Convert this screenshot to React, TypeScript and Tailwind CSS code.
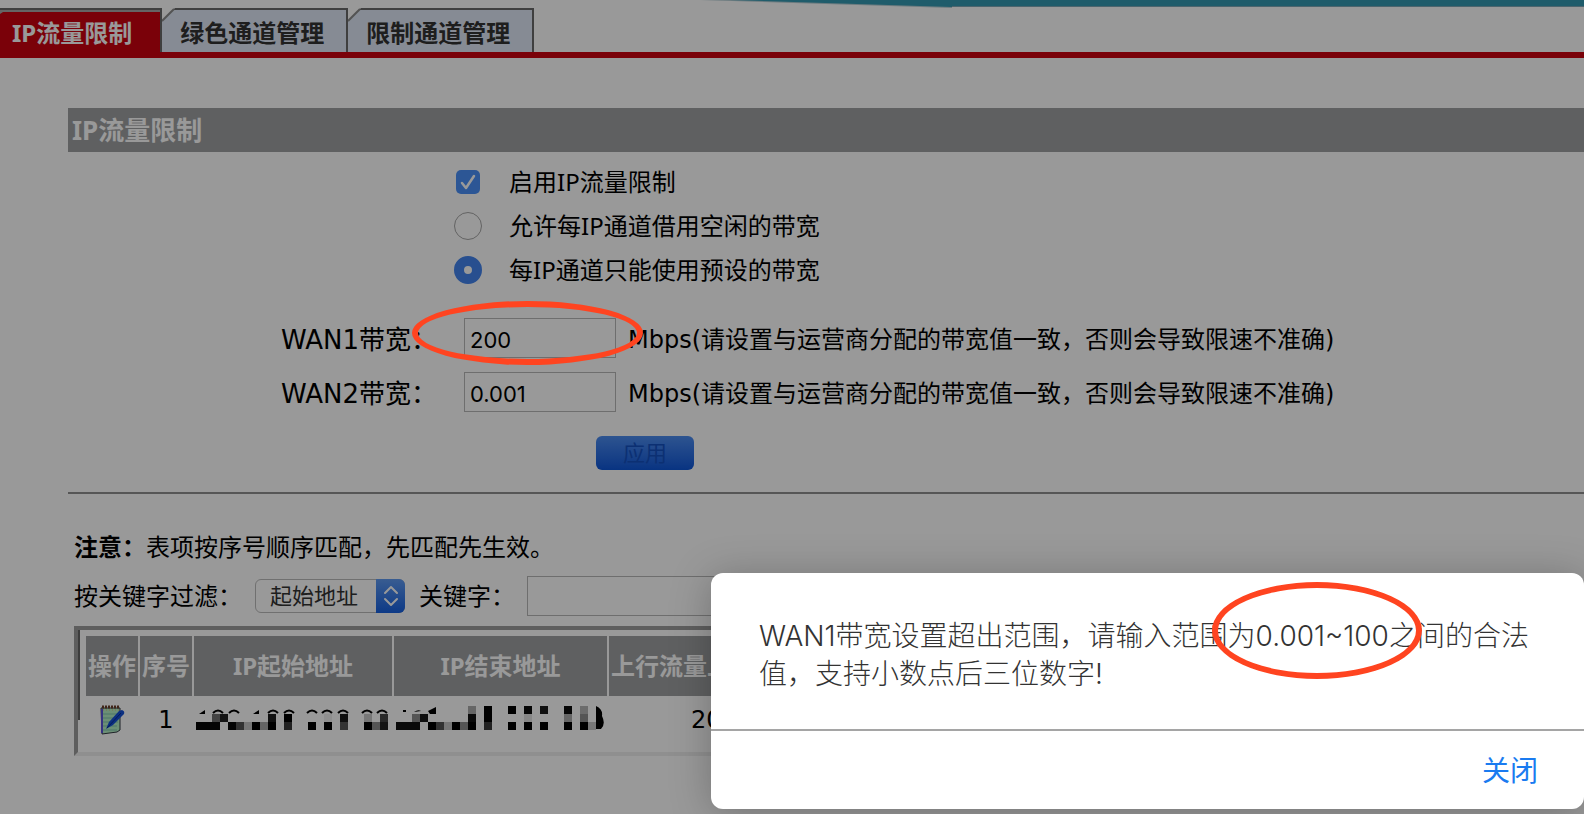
import { useState } from "react";

const uiFont = "font-['Noto_Sans','Noto_Sans_CJK_SC',sans-serif]";
const wideFont = "font-['DejaVu_Sans','Noto_Sans_CJK_SC',sans-serif]";
const controlFont = "font-['Inter','Noto_Sans_CJK_SC',sans-serif]";

const tabs = [
  { label: "IP流量限制", active: true },
  { label: "绿色通道管理", active: false },
  { label: "限制通道管理", active: false },
];

// x, y, width, height, fill
const mosaic: [number, number, number, number, string][] = [
  [0, 16, 24, 8, "#080808"],
  [16, 8, 8, 8, "#717171"],
  [24, 8, 8, 8, "#222"],
  [32, 16, 8, 8, "#080808"],
  [40, 16, 8, 8, "#555"],
  [48, 16, 8, 8, "#c6c6c6"],
  [56, 16, 8, 8, "#000"],
  [64, 16, 8, 8, "#a8a8a8"],
  [72, 8, 8, 8, "#1c1c1c"],
  [72, 16, 8, 8, "#000"],
  [88, 8, 8, 8, "#000"],
  [88, 16, 8, 8, "#3a3a3a"],
  [112, 16, 8, 8, "#000"],
  [128, 8, 8, 8, "#eee"],
  [128, 16, 8, 8, "#000"],
  [144, 8, 8, 8, "#1a1a1a"],
  [144, 16, 8, 8, "#555"],
  [168, 8, 8, 8, "#c6c6c6"],
  [168, 16, 8, 8, "#000"],
  [176, 16, 8, 8, "#8e8e8e"],
  [184, 8, 8, 8, "#444"],
  [184, 16, 8, 8, "#222"],
  [200, 16, 24, 8, "#121212"],
  [216, 8, 8, 8, "#8e8e8e"],
  [224, 8, 8, 8, "#1c1c1c"],
  [232, 16, 8, 8, "#000"],
  [240, 16, 8, 8, "#555"],
  [248, 16, 8, 8, "#c6c6c6"],
  [256, 16, 8, 8, "#000"],
  [264, 16, 8, 8, "#8e8e8e"],
  [272, 0, 8, 8, "#aaa"],
  [272, 8, 8, 8, "#111"],
  [272, 16, 8, 8, "#000"],
  [288, 0, 8, 16, "#000"],
  [288, 16, 8, 8, "#3a3a3a"],
  [312, 0, 8, 8, "#000"],
  [312, 16, 8, 8, "#000"],
  [328, 0, 8, 8, "#0a0a0a"],
  [328, 8, 8, 8, "#e2e2e2"],
  [328, 16, 8, 8, "#000"],
  [344, 0, 8, 8, "#1c1c1c"],
  [344, 16, 8, 8, "#000"],
  [368, 0, 8, 8, "#0a0a0a"],
  [368, 8, 8, 8, "#aaa"],
  [368, 16, 8, 8, "#000"],
  [384, 0, 8, 8, "#b4b4b4"],
  [384, 8, 8, 8, "#8e8e8e"],
  [384, 16, 8, 8, "#000"],
  [392, 16, 8, 8, "#c6c6c6"],
];

// centres of the round digit tops that stay visible above the mosaic
const digitTops = [22, 38, 77, 93, 116, 131, 147, 171, 186];

function MaskedRange() {
  return (
    <svg width="408" height="24" aria-hidden="true">
      {mosaic.map(([x, y, w, h, fill], i) => (
        <rect key={i} x={x} y={y} width={w} height={h} fill={fill} />
      ))}
      {digitTops.map((x) => (
        <path key={x} d={`M${x - 5} 7q5-5 10 0`} fill="none" stroke="#000" strokeWidth="2" />
      ))}
      <path d="M3 8L9 4v4zM57 8L63 4v4zM207 4h3v2h-3zM218 6q4-3 7-1zM232 5L240 1v7h-6z" />
      <path d="M400 0q7 3 6 10 4 8-1 13h-5z" />
    </svg>
  );
}

function NotepadIcon() {
  return (
    <svg className="mx-auto" width="26" height="30" viewBox="0 0 26 30" aria-hidden="true">
      <path d="M2 3h19v22l-3 2-15 2z" fill="#b4eec4" stroke="#333a44" />
      <path d="M3 4v24" stroke="#5a55d8" strokeWidth="2" />
      <path d="M4 9h15M4 13h15M4 17h15M4 21h14M4 25h14" stroke="#7fc4b0" />
      <path d="M3 2h18" stroke="#6b3f2a" strokeWidth="3" strokeDasharray="2 1" />
      <path d="M4 5h17" stroke="#d9b27a" strokeDasharray="1 2" />
      <path d="M23 5q3 1 2 4L14 20l-7 4 3-7L20 6z" fill="#1450d8" />
      <path d="M8 23L22 8" stroke="#0a2c96" />
    </svg>
  );
}

function Circled({ className }: { className: string }) {
  return <div className={`pointer-events-none absolute rounded-[50%] border-6 border-[#ff4420] ${className}`} />;
}

export default function App() {
  const [enabled, setEnabled] = useState(true);
  const [mode, setMode] = useState("preset");
  const [wan, setWan] = useState(["200", "0.001"]);
  const [open, setOpen] = useState(true);

  return (
    <div className={`relative min-h-screen overflow-hidden bg-white text-2xl text-black ${uiFont}`}>
      {/* Banner edge */}
      <svg className="absolute top-0 right-0 h-2 w-[884px]" viewBox="0 0 884 8" aria-hidden="true">
        <path d="M0 0L252 8V0z" fill="#b4cdd4" />
        <path d="M30 0L252 7H884V0z" fill="#3499b2" />
        <path d="M252 6.5H884" stroke="#7fa9b8" />
      </svg>

      {/* Tabs */}
      <nav className="flex h-[58px] items-end border-b-6 border-[#cb030f]">
        {tabs.map((t) => (
          <a
            key={t.label}
            href="#"
            className={`relative flex h-11 items-center border-t-2 border-r-2 border-[#6a6a6a] pt-1 font-bold ${
              t.active ? "bg-[#cb030f] pr-7 pl-3 text-white" : "bg-[#dfe8f7] pr-[22px] pl-[18px] text-[#333]"
            }`}
          >
            {t.active ? (
              <svg className="absolute top-0 left-0 h-1 w-full" preserveAspectRatio="none" viewBox="0 0 160 4" aria-hidden="true">
                <path d="M0 0h160v2H3L0 4z" fill="#a8a8a8" />
              </svg>
            ) : (
              <svg className="absolute -top-0.5 left-0" width="14" height="14" aria-hidden="true">
                <path d="M0 0h13L0 13z" fill="#fff" />
                <path d="M0 13L12 1" stroke="#8a8a8a" strokeWidth="2" />
              </svg>
            )}
            {t.label}
          </a>
        ))}
      </nav>

      <main className="pt-[50px] pl-[68px]">
        <h1 className="h-11 bg-[#9ea0a2] pl-1 text-[26px] leading-11 font-bold text-white">IP流量限制</h1>

        {/* Options */}
        <div className="flex flex-col pt-2 pl-[386px]">
          <label className="flex h-11 items-center gap-[27px]">
            <span className="relative flex w-7 justify-center">
              <input
                type="checkbox"
                checked={enabled}
                onChange={(e) => setEnabled(e.target.checked)}
                className="peer size-6 appearance-none rounded-[5px] border border-[#bbb] checked:border-0 checked:bg-[#4a90f8]"
              />
              <svg
                className="pointer-events-none absolute top-0 left-0.5 hidden peer-checked:block"
                width="24"
                height="24"
                fill="none"
                aria-hidden="true"
              >
                <path d="M6 13l4 5 8-12" stroke="#fff" strokeWidth="2.5" strokeLinecap="round" strokeLinejoin="round" />
              </svg>
            </span>
            启用IP流量限制
          </label>
          {[
            { id: "borrow", label: "允许每IP通道借用空闲的带宽" },
            { id: "preset", label: "每IP通道只能使用预设的带宽" },
          ].map((o) => (
            <label key={o.id} className="flex h-11 items-center gap-[27px]">
              <input
                type="radio"
                name="mode"
                checked={mode === o.id}
                onChange={() => setMode(o.id)}
                className="size-7 appearance-none rounded-full border border-[#a5a5a5] bg-white checked:border-10 checked:border-[#4384ee]"
              />
              {o.label}
            </label>
          ))}
        </div>

        {/* Bandwidth */}
        <div className={`flex flex-col gap-[14px] pt-[26px] ${wideFont}`}>
          {wan.map((value, i) => (
            <div key={i} className="flex h-10 items-center">
              <label htmlFor={`wan${i}`} className="w-[396px] pt-1 pl-[213px] text-[26px] whitespace-nowrap">
                WAN{i + 1}带宽：
              </label>
              <input
                id={`wan${i}`}
                value={value}
                onChange={(e) => setWan(wan.map((v, j) => (j === i ? e.target.value : v)))}
                className={`h-10 w-[152px] border border-[#b8b8b8] bg-white px-[5px] pt-1 text-[22px] ${controlFont}`}
              />
              <span className="pt-1 pl-3 whitespace-nowrap">
                Mbps(请设置与运营商分配的带宽值一致，否则会导致限速不准确)
              </span>
            </div>
          ))}
        </div>
        <div className="pt-6 pb-[22px] pl-[528px]">
          <button className="block h-[34px] w-[98px] rounded-[6px] bg-linear-to-b from-[#4c8cf0] to-[#0d56d8] pb-0.5 text-[22px] leading-6 text-[#1450c0]">
            应用
          </button>
        </div>
        <hr className="border-t-2 border-[#8f8f8f]" />

        {/* Rules */}
        <section className="pl-1.5">
          <p className="pt-[35px] leading-9">
            <b>注意：</b>表项按序号顺序匹配，先匹配先生效。
          </p>
          <div className="flex h-[61px] items-center">
            <label htmlFor="field" className="w-[181px]">
              按关键字过滤：
            </label>
            <div className="relative">
              <select
                id="field"
                className="block h-[34px] w-[150px] appearance-none rounded-[6px] border border-[#bbb] bg-white pl-3.5 text-[22px] text-[#333]"
              >
                <option>起始地址</option>
              </select>
              <svg className="pointer-events-none absolute top-0 right-0" width="29" height="34" fill="none" aria-hidden="true">
                <defs>
                  <linearGradient id="arrows" x1="0" y1="0" x2="0" y2="1">
                    <stop stopColor="#5f9af2" />
                    <stop offset="1" stopColor="#1660e0" />
                  </linearGradient>
                </defs>
                <path d="M0 0h23a6 6 0 016 6v22a6 6 0 01-6 6H0z" fill="url(#arrows)" />
                <path d="M9 14l6-6 6 6M9 20l6 6 6-6" stroke="#fff" strokeWidth="2" strokeLinecap="round" strokeLinejoin="round" />
              </svg>
            </div>
            <label htmlFor="keyword" className="w-[122px] pl-3.5 whitespace-nowrap">
              关键字：
            </label>
            <input id="keyword" className="h-10 w-[300px] border border-[#b8b8b8] bg-white px-1.5" />
          </div>

          <div className="flex border-4 border-r-0 border-t-[#9d9d9d] border-b-[#eee] border-l-[#9d9d9d]">
            <div className="h-[90px] w-0.5 shrink-0 bg-[#666]" />
            <div className="h-[122px] flex-1 pl-1">
              <table className="w-full table-fixed border-separate border-spacing-x-0.5 border-spacing-y-0 pt-1.5">
                <thead>
                  <tr className="h-[60px] bg-[#9ea0a2] text-white">
                    <th className="w-[52px]">操作</th>
                    <th className="w-[52px]">序号</th>
                    <th className="w-[198px]">IP起始地址</th>
                    <th className="w-[213px]">IP结束地址</th>
                    <th className="pl-0.5 text-left">上行流量上限</th>
                  </tr>
                </thead>
                <tbody>
                  <tr className="h-12">
                    <td>
                      <NotepadIcon />
                    </td>
                    <td className={`text-center ${wideFont}`}>1</td>
                    <td colSpan={2} className="pb-1 pl-0.5">
                      <MaskedRange />
                    </td>
                    <td className={`pl-[82px] ${wideFont}`}>200</td>
                  </tr>
                </tbody>
              </table>
            </div>
          </div>
        </section>
      </main>

      {open && (
        <>
          <div className="absolute inset-0 bg-black/40" />
          <div
            role="alertdialog"
            aria-labelledby="message"
            className={`absolute right-0 bottom-[5px] w-[873px] rounded-xl bg-white shadow-[0_4px_40px_rgba(0,0,0,0.25)] ${controlFont}`}
          >
            <p id="message" className="px-12 pt-11 pb-9 text-[28px] leading-[38px] font-light text-[#333]">
              WAN1带宽设置超出范围，请输入范围为0.001~100之间的合法值，支持小数点后三位数字!
            </p>
            <div className="flex h-20 items-center justify-end border-t-2 border-[#a5a5a5] px-[46px] pt-1">
              <button onClick={() => setOpen(false)} className="text-[28px] text-[#1a7bf0]">
                关闭
              </button>
            </div>
          </div>
        </>
      )}

      <Circled className="top-[301px] left-[412px] h-16 w-[231px]" />
      <Circled className="top-[582px] left-[1212px] h-[97px] w-[210px]" />
    </div>
  );
}
